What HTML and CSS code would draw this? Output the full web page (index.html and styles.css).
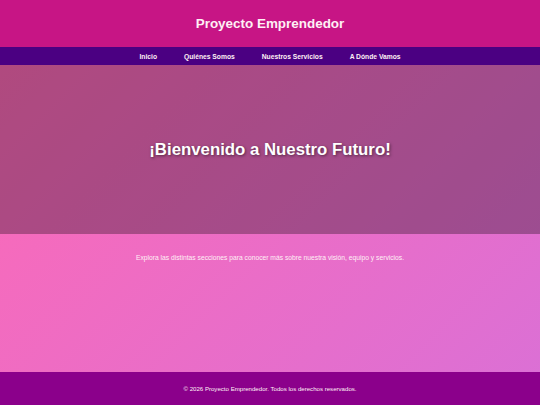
FILE: index.html
```html
<!DOCTYPE html>
<html lang="es">
<head>
<meta charset="utf-8">
<title>Proyecto Emprendedor</title>
<link rel="stylesheet" href="styles.css">
</head>
<body>
<header class="site-header">
  <h1 class="site-title">Proyecto Emprendedor</h1>
</header>
<nav class="site-nav">
  <a href="#">Inicio</a>
  <a href="#">Quiénes Somos</a>
  <a href="#">Nuestros Servicios</a>
  <a href="#">A Dónde Vamos</a>
</nav>
<section class="hero">
  <h2 class="hero-title">¡Bienvenido a Nuestro Futuro!</h2>
</section>
<main class="content">
  <p class="intro">Explora las distintas secciones para conocer más sobre nuestra visión, equipo y servicios.</p>
</main>
<footer class="site-footer">
  <p>© 2026 Proyecto Emprendedor. Todos los derechos reservados.</p>
</footer>
</body>
</html>
```
FILE: styles.css
```css
html, body {
  margin: 0;
  padding: 0;
}
body {
  min-height: 100vh;
  display: flex;
  flex-direction: column;
  font-family: "Liberation Sans", Arial, sans-serif;
  color: #fff0f5;
  background: linear-gradient(135deg, #ff69b4, #da70d6);
}
.site-header {
  background: #c71585;
  height: 47px;
  display: flex;
  align-items: center;
  justify-content: center;
}
.site-title {
  margin: 0;
  font-size: 13.44px;
  font-weight: bold;
}
.site-nav {
  background: #4b0082;
  height: 18px;
  display: flex;
  align-items: center;
  justify-content: center;
  gap: 27px;
}
.site-nav a {
  color: #fff0f5;
  text-decoration: none;
  font-size: 6.72px;
  font-weight: bold;
}
.hero {
  height: 169px;
  background: rgba(0, 0, 0, 0.3);
  display: flex;
  align-items: center;
  justify-content: center;
}
.hero-title {
  margin: 0;
  font-size: 16.8px;
  font-weight: bold;
  color: #fff;
  text-shadow: 1px 1px 3px rgba(0, 0, 0, 0.5);
}
.content {
  flex: 1;
  padding-top: 20px;
  text-align: center;
}
.intro {
  margin: 0;
  font-size: 6.72px;
}
.site-footer {
  background: #8b008b;
  height: 33px;
  display: flex;
  align-items: center;
  justify-content: center;
}
.site-footer p {
  margin: 0;
  font-size: 6.1px;
}
```
